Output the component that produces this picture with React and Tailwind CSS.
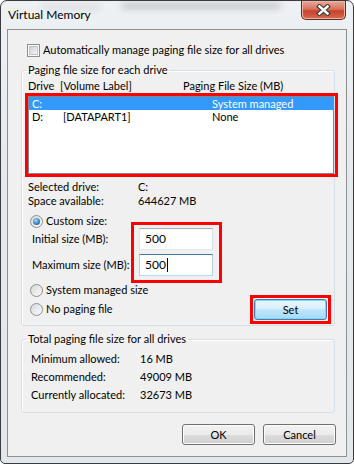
import React from "react";

const btnBase =
  "h-[21px] w-[73px] rounded-[3px] border text-[11px] leading-[14px] flex items-center justify-center";

const Button = ({ children, primary }) => (
  <button
    className={`${btnBase} ${
      primary
        ? "border-[#3c7fb1] bg-[linear-gradient(#eaf6fd_0%,#d9f0fc_50%,#bee6fd_50%,#a7d9f5_100%)] shadow-[inset_0_0_0_1px_#7fd6f5]"
        : "border-[#707070] bg-[linear-gradient(#f2f2f2_0%,#ebebeb_50%,#dddddd_50%,#cfcfcf_100%)] shadow-[inset_0_0_0_1px_#fcfcfc]"
    }`}
  >
    {children}
  </button>
);

const Radio = ({ checked }) => (
  <span className="w-[13px] h-[13px] rounded-full border border-[#8e8f8f] bg-[linear-gradient(135deg,#d8d8d8,#fbfbfb)] flex items-center justify-center shrink-0">
    {checked && (
      <span className="w-[7px] h-[7px] rounded-full bg-[radial-gradient(circle_at_40%_35%,#a6dcf8_0%,#3b83c4_55%,#1b4e80_100%)]" />
    )}
  </span>
);

const Checkbox = () => (
  <span className="w-[13px] h-[13px] border border-[#8e8f8f] bg-white p-[1px] shrink-0">
    <span className="block w-full h-full border border-[#c1c4c9] bg-[linear-gradient(135deg,#cbcfd5,#f6f6f6)]" />
  </span>
);

const GroupBox = ({ title, className = "", children }) => (
  <fieldset
    className={`border border-[#d5dfe5] rounded-[3px] shadow-[inset_1px_1px_0_#ffffff] ${className}`}
  >
    <legend className="ml-[4px] px-[2px] leading-[14px]">{title}</legend>
    {children}
  </fieldset>
);

const RedFrame = ({ className }) => (
  <div
    className={`absolute border-[3px] border-[#ff0000] pointer-events-none ${className}`}
  />
);

const drives = [
  { drive: "C:", label: "", size: "System managed", selected: true },
  { drive: "D:", label: "[DATAPART1]", size: "None" },
];

const totals = [
  ["Minimum allowed:", "16 MB"],
  ["Recommended:", "49009 MB"],
  ["Currently allocated:", "32673 MB"],
];

export default function App() {
  return (
    <div className="relative w-[354px] h-[464px] overflow-hidden rounded-t-[7px] rounded-b-[5px] border border-[#3b3b3b] bg-[linear-gradient(180deg,#eef1f4_0%,#e4e9ee_40%,#e2e7ec_100%)] font-['Lato','Liberation_Sans',sans-serif] text-[11px] text-black">
      {/* blurred glass behind the title bar */}
      <div className="absolute left-[120px] top-[2px] w-[160px] h-[6px] rounded-full bg-[#9aa0a6] opacity-50 blur-[3px]" />
      <div className="absolute left-[40px] top-[4px] w-[60px] h-[4px] rounded-full bg-[#b6bbc0] opacity-50 blur-[3px]" />

      <div className="relative h-[28px] flex items-start justify-between pl-[7px]">
        <span className="mt-[6px] leading-[16px] text-[12px]">Virtual Memory</span>
        <button className="mr-[7px] w-[45px] h-[19px] rounded-b-[5px] border border-t-0 border-[#5a2a24] bg-[linear-gradient(#e9a99b_0%,#d7725e_45%,#c7432c_55%,#d66a4f_100%)] shadow-[inset_0_0_0_1px_#f0b5a6] flex items-center justify-center">
          <svg width="15" height="12" viewBox="0 0 15 12">
            <path
              d="M3.5 2.5 L11.5 9.5 M11.5 2.5 L3.5 9.5"
              stroke="#3c3c3c"
              strokeWidth="4.6"
              strokeLinecap="square"
            />
            <path
              d="M3.5 2.5 L11.5 9.5 M11.5 2.5 L3.5 9.5"
              stroke="#ffffff"
              strokeWidth="2.4"
              strokeLinecap="square"
            />
          </svg>
        </button>
      </div>

      <div className="mx-[6px] h-[428px] border border-[#8e8f8f] bg-[#f0f0f0] pl-[13px] pr-[11px] flex flex-col">
        <div className="mt-[13px] ml-[6px] h-[14px] flex items-center gap-[3px]">
          <Checkbox />
          <span>Automatically manage paging file size for all drives</span>
        </div>

        <GroupBox title="Paging file size for each drive" className="mt-[6px]">
          <div className="pl-[6px] pb-[5px]">
            <div className="mt-[2px] h-[14px] flex items-center">
              <span className="w-[32px]">Drive</span>
              <span className="w-[123px]">[Volume Label]</span>
              <span>Paging File Size (MB)</span>
            </div>

            <div className="relative mt-[3px] h-[78px] border border-[#828790] bg-white">
              {drives.map((d) => (
                <div
                  key={d.drive}
                  className={`h-[13px] flex items-center pl-[3px] leading-[13px] ${
                    d.selected ? "bg-[#3399ff] text-white" : ""
                  }`}
                >
                  <span className="w-[31px]">{d.drive}</span>
                  <span className="w-[149px]">{d.label}</span>
                  <span>{d.size}</span>
                </div>
              ))}
              <RedFrame className="-left-[4px] -top-[4px] -right-[5px] -bottom-[4px]" />
            </div>

            <div className="mt-[6px] h-[14px] flex items-center">
              <span className="w-[110px]">Selected drive:</span>
              <span>C:</span>
            </div>
            <div className="h-[14px] flex items-center">
              <span className="w-[110px]">Space available:</span>
              <span>644627 MB</span>
            </div>

            <div className="mt-[7px] h-[13px] pl-[2px] flex items-center gap-[3px]">
              <Radio checked />
              <span>Custom size:</span>
            </div>

            <div className="flex pl-[4px]">
              <div className="w-[107px] flex flex-col gap-[4px]">
                <div className="h-[22px] flex items-center">Initial size (MB):</div>
                <div className="h-[22px] flex items-center">Maximum size (MB):</div>
              </div>
              <div className="relative w-[74px] flex flex-col gap-[4px]">
                <div className="h-[22px] border border-[#abadb3] border-l-[#e2e3ea] border-r-[#dbdfe6] border-b-[#e3e9ef] bg-white pl-[5px] flex items-center text-[12px]">
                  500
                </div>
                <div className="h-[22px] border border-[#3d7bad] border-l-[#b5cfe7] border-r-[#b5cfe7] border-b-[#b7d9ed] bg-white pl-[5px] flex items-center text-[12px]">
                  500
                  <span className="ml-[1px] w-[1px] h-[14px] bg-black" />
                </div>
                <RedFrame className="-left-[8px] -top-[6px] -right-[9px] -bottom-[7px]" />
              </div>
            </div>

            <div className="flex items-start justify-between">
              <div className="mt-[7px] pl-[2px] flex flex-col gap-[5px]">
                <div className="h-[14px] flex items-center gap-[3px]">
                  <Radio />
                  <span>System managed size</span>
                </div>
                <div className="h-[14px] flex items-center gap-[3px]">
                  <Radio />
                  <span>No paging file</span>
                </div>
              </div>
              <div className="relative mt-[23px] mr-[7px]">
                <Button primary>Set</Button>
                <RedFrame className="-left-[4px] -top-[4px] -right-[4px] -bottom-[4px]" />
              </div>
            </div>
          </div>
        </GroupBox>

        <GroupBox title="Total paging file size for all drives" className="mt-[6px]">
          <div className="pl-[9px] pt-[4px] pb-[8px]">
            {totals.map(([label, value]) => (
              <div key={label} className="h-[18px] flex items-center">
                <span className="w-[109px]">{label}</span>
                <span>{value}</span>
              </div>
            ))}
          </div>
        </GroupBox>

        <div className="mt-[11px] -mr-[1px] flex justify-end gap-[8px]">
          <Button>OK</Button>
          <Button>Cancel</Button>
        </div>
      </div>
    </div>
  );
}
